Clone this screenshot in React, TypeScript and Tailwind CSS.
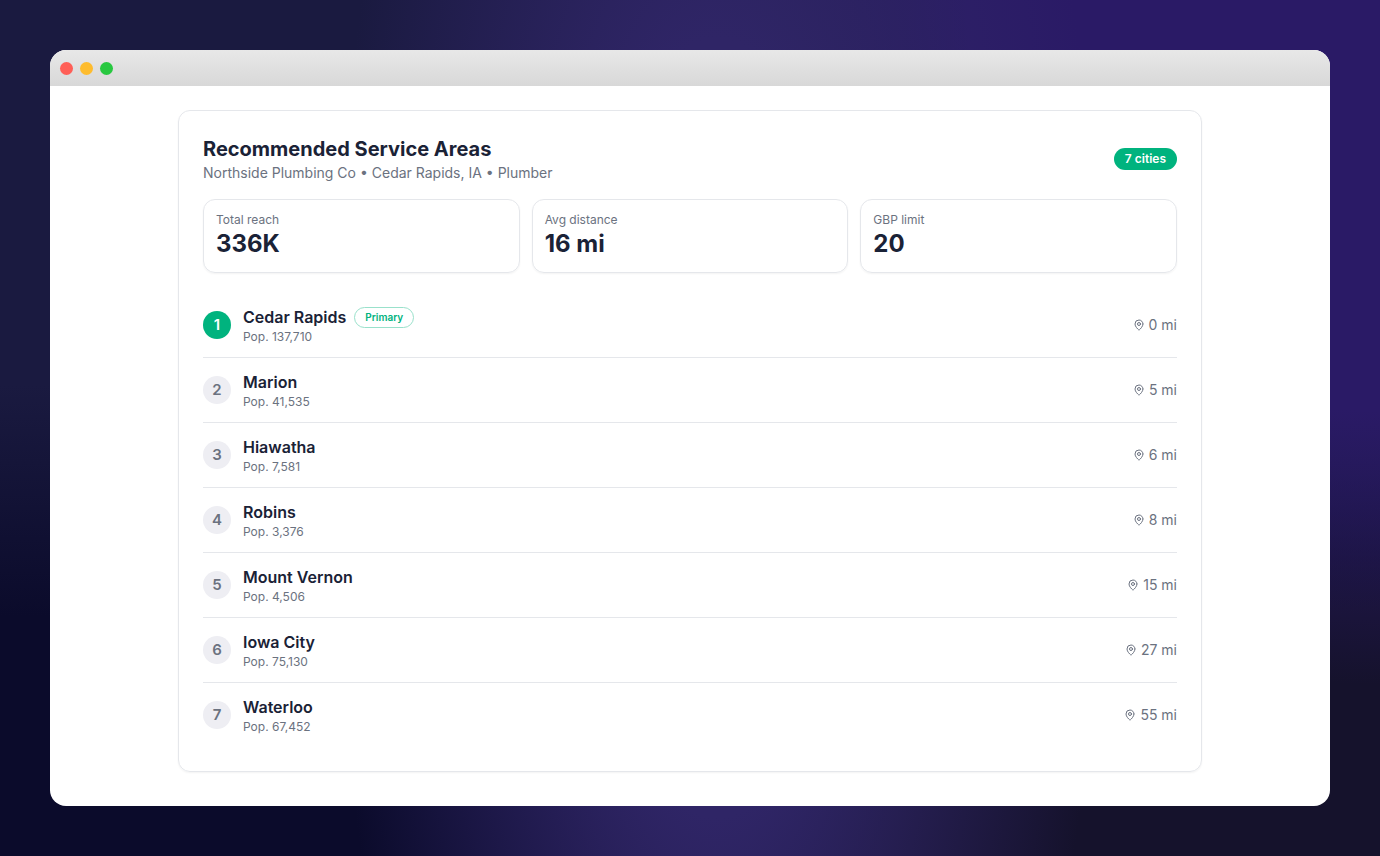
const stats = [
  { label: 'Total reach', value: '336K' },
  { label: 'Avg distance', value: '16 mi' },
  { label: 'GBP limit', value: '20' },
]

const cities = [
  { name: 'Cedar Rapids', pop: '137,710', dist: 0 },
  { name: 'Marion', pop: '41,535', dist: 5 },
  { name: 'Hiawatha', pop: '7,581', dist: 6 },
  { name: 'Robins', pop: '3,376', dist: 8 },
  { name: 'Mount Vernon', pop: '4,506', dist: 15 },
  { name: 'Iowa City', pop: '75,130', dist: 27 },
  { name: 'Waterloo', pop: '67,452', dist: 55 },
]

function Pin() {
  return (
    <svg width="12" height="12" viewBox="0 0 24 24" fill="none" stroke="currentColor" strokeWidth="2" strokeLinecap="round" strokeLinejoin="round">
      <path d="M20 10c0 4.993-5.539 10.193-7.399 11.799a1 1 0 0 1-1.202 0C9.539 20.193 4 14.993 4 10a8 8 0 0 1 16 0" />
      <circle cx="12" cy="10" r="3" />
    </svg>
  )
}

export default function App() {
  return (
    <div className="min-h-[856px] p-[50px] bg-[radial-gradient(ellipse_28%_130%_at_52%_50%,#2f2566_35%,rgba(47,37,102,0)_100%),radial-gradient(ellipse_50%_80%_at_100%_0%,#2a1a66_60%,rgba(42,26,102,0)_100%),radial-gradient(ellipse_60%_48%_at_100%_100%,#15122c_60%,rgba(21,18,44,0)_100%),linear-gradient(180deg,#1a1a40_45%,#0b0b2b_72%)] font-['Inter',sans-serif]">
      <div className="h-[756px] rounded-2xl overflow-hidden bg-white flex flex-col">
        <div className="h-9 shrink-0 flex items-center gap-[7px] px-2.5 pt-px bg-gradient-to-b from-[#e8e8e8] to-[#d8d8d8]">
          <span className="w-[13px] h-[13px] rounded-full bg-[#ff5f57]" />
          <span className="w-[13px] h-[13px] rounded-full bg-[#febc2e]" />
          <span className="w-[13px] h-[13px] rounded-full bg-[#28c840]" />
        </div>
        <div className="pt-6 flex justify-center">
          <div className="w-[1024px] h-[662px] border border-[#e5e7eb] rounded-xl p-6 shadow-[0_1px_2px_rgba(0,0,0,0.05)]">
            <div className="flex items-center justify-between">
              <div>
                <h1 className="text-xl leading-7 font-bold text-[#1a2236]">Recommended Service Areas</h1>
                <p className="text-sm leading-5 text-[#6b7280]">Northside Plumbing Co • Cedar Rapids, IA • Plumber</p>
              </div>
              <span className="px-[11px] py-1 rounded-full bg-[#00b37e] text-white text-xs leading-[14px] font-semibold">7 cities</span>
            </div>
            <div className="grid grid-cols-3 gap-3 mt-4">
              {stats.map((s) => (
                <div key={s.label} className="h-[74px] border border-[#e5e7eb] rounded-xl px-3 pt-3 shadow-[0_1px_2px_rgba(0,0,0,0.05)]">
                  <div className="text-xs leading-4 text-[#6b7280]">{s.label}</div>
                  <div className="text-2xl leading-8 font-bold text-[#1a2236]">{s.value}</div>
                </div>
              ))}
            </div>
            <div className="mt-[20px]">
              {cities.map((c, i) => (
                <div key={c.name} className={`h-[65px] flex items-center gap-3 border-b ${i < cities.length - 1 ? 'border-[#e5e7eb]' : 'border-transparent'}`}>
                  <span className={`w-7 h-7 rounded-full flex items-center justify-center text-[15px] font-semibold ${i === 0 ? 'bg-[#00b37e] text-white' : 'bg-[#eeeef3] text-[#6b7280]'}`}>{i + 1}</span>
                  <div className="flex-1">
                    <div className="flex items-center gap-2">
                      <span className="text-base leading-6 font-semibold text-[#1a2236]">{c.name}</span>
                      {i === 0 && (
                        <span className="px-2.5 py-[3px] rounded-full border border-[#99e1cb] text-[#00b37e] text-[10px] leading-[13px] font-semibold">Primary</span>
                      )}
                    </div>
                    <div className="text-xs leading-4 text-[#6b7280]">Pop. {c.pop}</div>
                  </div>
                  <div className="flex items-center gap-1 text-sm text-[#6b7280]">
                    <Pin />
                    <span>{c.dist} mi</span>
                  </div>
                </div>
              ))}
            </div>
          </div>
        </div>
      </div>
    </div>
  )
}
